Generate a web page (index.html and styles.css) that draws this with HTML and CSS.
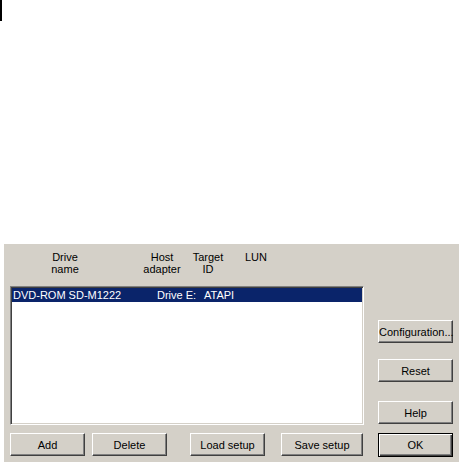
FILE: index.html
```html
<!DOCTYPE html>
<html>
<head>
<meta charset="utf-8">
<link rel="stylesheet" href="styles.css">
</head>
<body>
<div class="mark"></div>
<div class="dialog">
  <div class="header">
    <div class="col col-name">Drive<br>name</div>
    <div class="col col-host">Host<br>adapter</div>
    <div class="col col-target">Target<br>ID</div>
    <div class="col col-lun">LUN</div>
  </div>
  <div class="listbox">
    <div class="row selected">
      <span class="cell c1">DVD-ROM SD-M1222</span>
      <span class="cell c2">Drive E:</span>
      <span class="cell c3">ATAPI</span>
    </div>
  </div>
  <div class="side">
    <button class="btn b-config">Configuration...</button>
    <button class="btn b-reset">Reset</button>
    <button class="btn b-help">Help</button>
  </div>
  <div class="bottom">
    <button class="btn b-add">Add</button>
    <button class="btn b-delete">Delete</button>
    <button class="btn b-load">Load setup</button>
    <button class="btn b-save">Save setup</button>
  </div>
  <div class="okcell">
    <button class="btn default">OK</button>
  </div>
</div>
</body>
</html>
```
FILE: styles.css
```css
html, body {
  margin: 0;
  padding: 0;
  background: #ffffff;
  width: 459px;
  height: 462px;
  overflow: hidden;
  font-family: "Liberation Sans", Arial, sans-serif;
  font-size: 11px;
  color: #000;
}
.mark {
  width: 2px;
  height: 21px;
  background: #000;
}
.dialog {
  margin: 223px 0 0 4px;
  width: 455px;
  height: 218px;
  background: #d4d0c8;
  display: grid;
  grid-template-columns: 354px 75px;
  grid-template-rows: 34px 139px 24px;
  column-gap: 14px;
  row-gap: 8px;
  padding-left: 6px;
  box-sizing: border-box;
}
.header {
  grid-column: 1 / 3;
  display: flex;
  padding-top: 7px;
  line-height: 12px;
}
.col { text-align: center; }
.col-name { margin-left: 25px; width: 60px; }
.col-host { margin-left: 42px; width: 50px; }
.col-target { margin-left: 1px; width: 40px; }
.col-lun { margin-left: 10px; width: 36px; }

.listbox {
  background: #fff;
  border: 1px solid;
  border-color: #808080 #ffffff #ffffff #808080;
  box-shadow: inset 1px 1px 0 #404040, inset -1px -1px 0 #d4d0c8;
  padding: 1px;
  box-sizing: border-box;
}
.row {
  display: flex;
  height: 14px;
  line-height: 14px;
  white-space: nowrap;
}
.row.selected { background: #0a246a; color: #fff; }
.c1 { margin-left: 1px; width: 144px; }
.c2 { width: 47px; }

.side {
  display: flex;
  flex-direction: column;
  padding-top: 34px;
}
.btn {
  font-family: "Liberation Sans", Arial, sans-serif;
  font-size: 11px;
  color: #000;
  background: #d4d0c8;
  width: 75px;
  height: 23px;
  padding: 0;
  margin: 0;
  border: 1px solid;
  border-color: #ffffff #404040 #404040 #ffffff;
  box-shadow: inset -1px -1px 0 #808080, inset 1px 1px 0 #d4d0c8;
  box-sizing: border-box;
}
.b-reset { margin-top: 16px; }
.b-help { margin-top: 19px; }

.bottom {
  display: flex;
  align-items: flex-start;
}
.b-delete { margin-left: 7px; }
.b-load { margin-left: 23px; }
.b-save { margin-left: 16px; width: 82px; }

.okcell { display: flex; }
.btn.default {
  width: 76px;
  height: 24px;
  border: 1px solid #000;
  box-shadow: inset 1px 1px 0 #ffffff, inset -1px -1px 0 #404040, inset -2px -2px 0 #808080;
}
```
